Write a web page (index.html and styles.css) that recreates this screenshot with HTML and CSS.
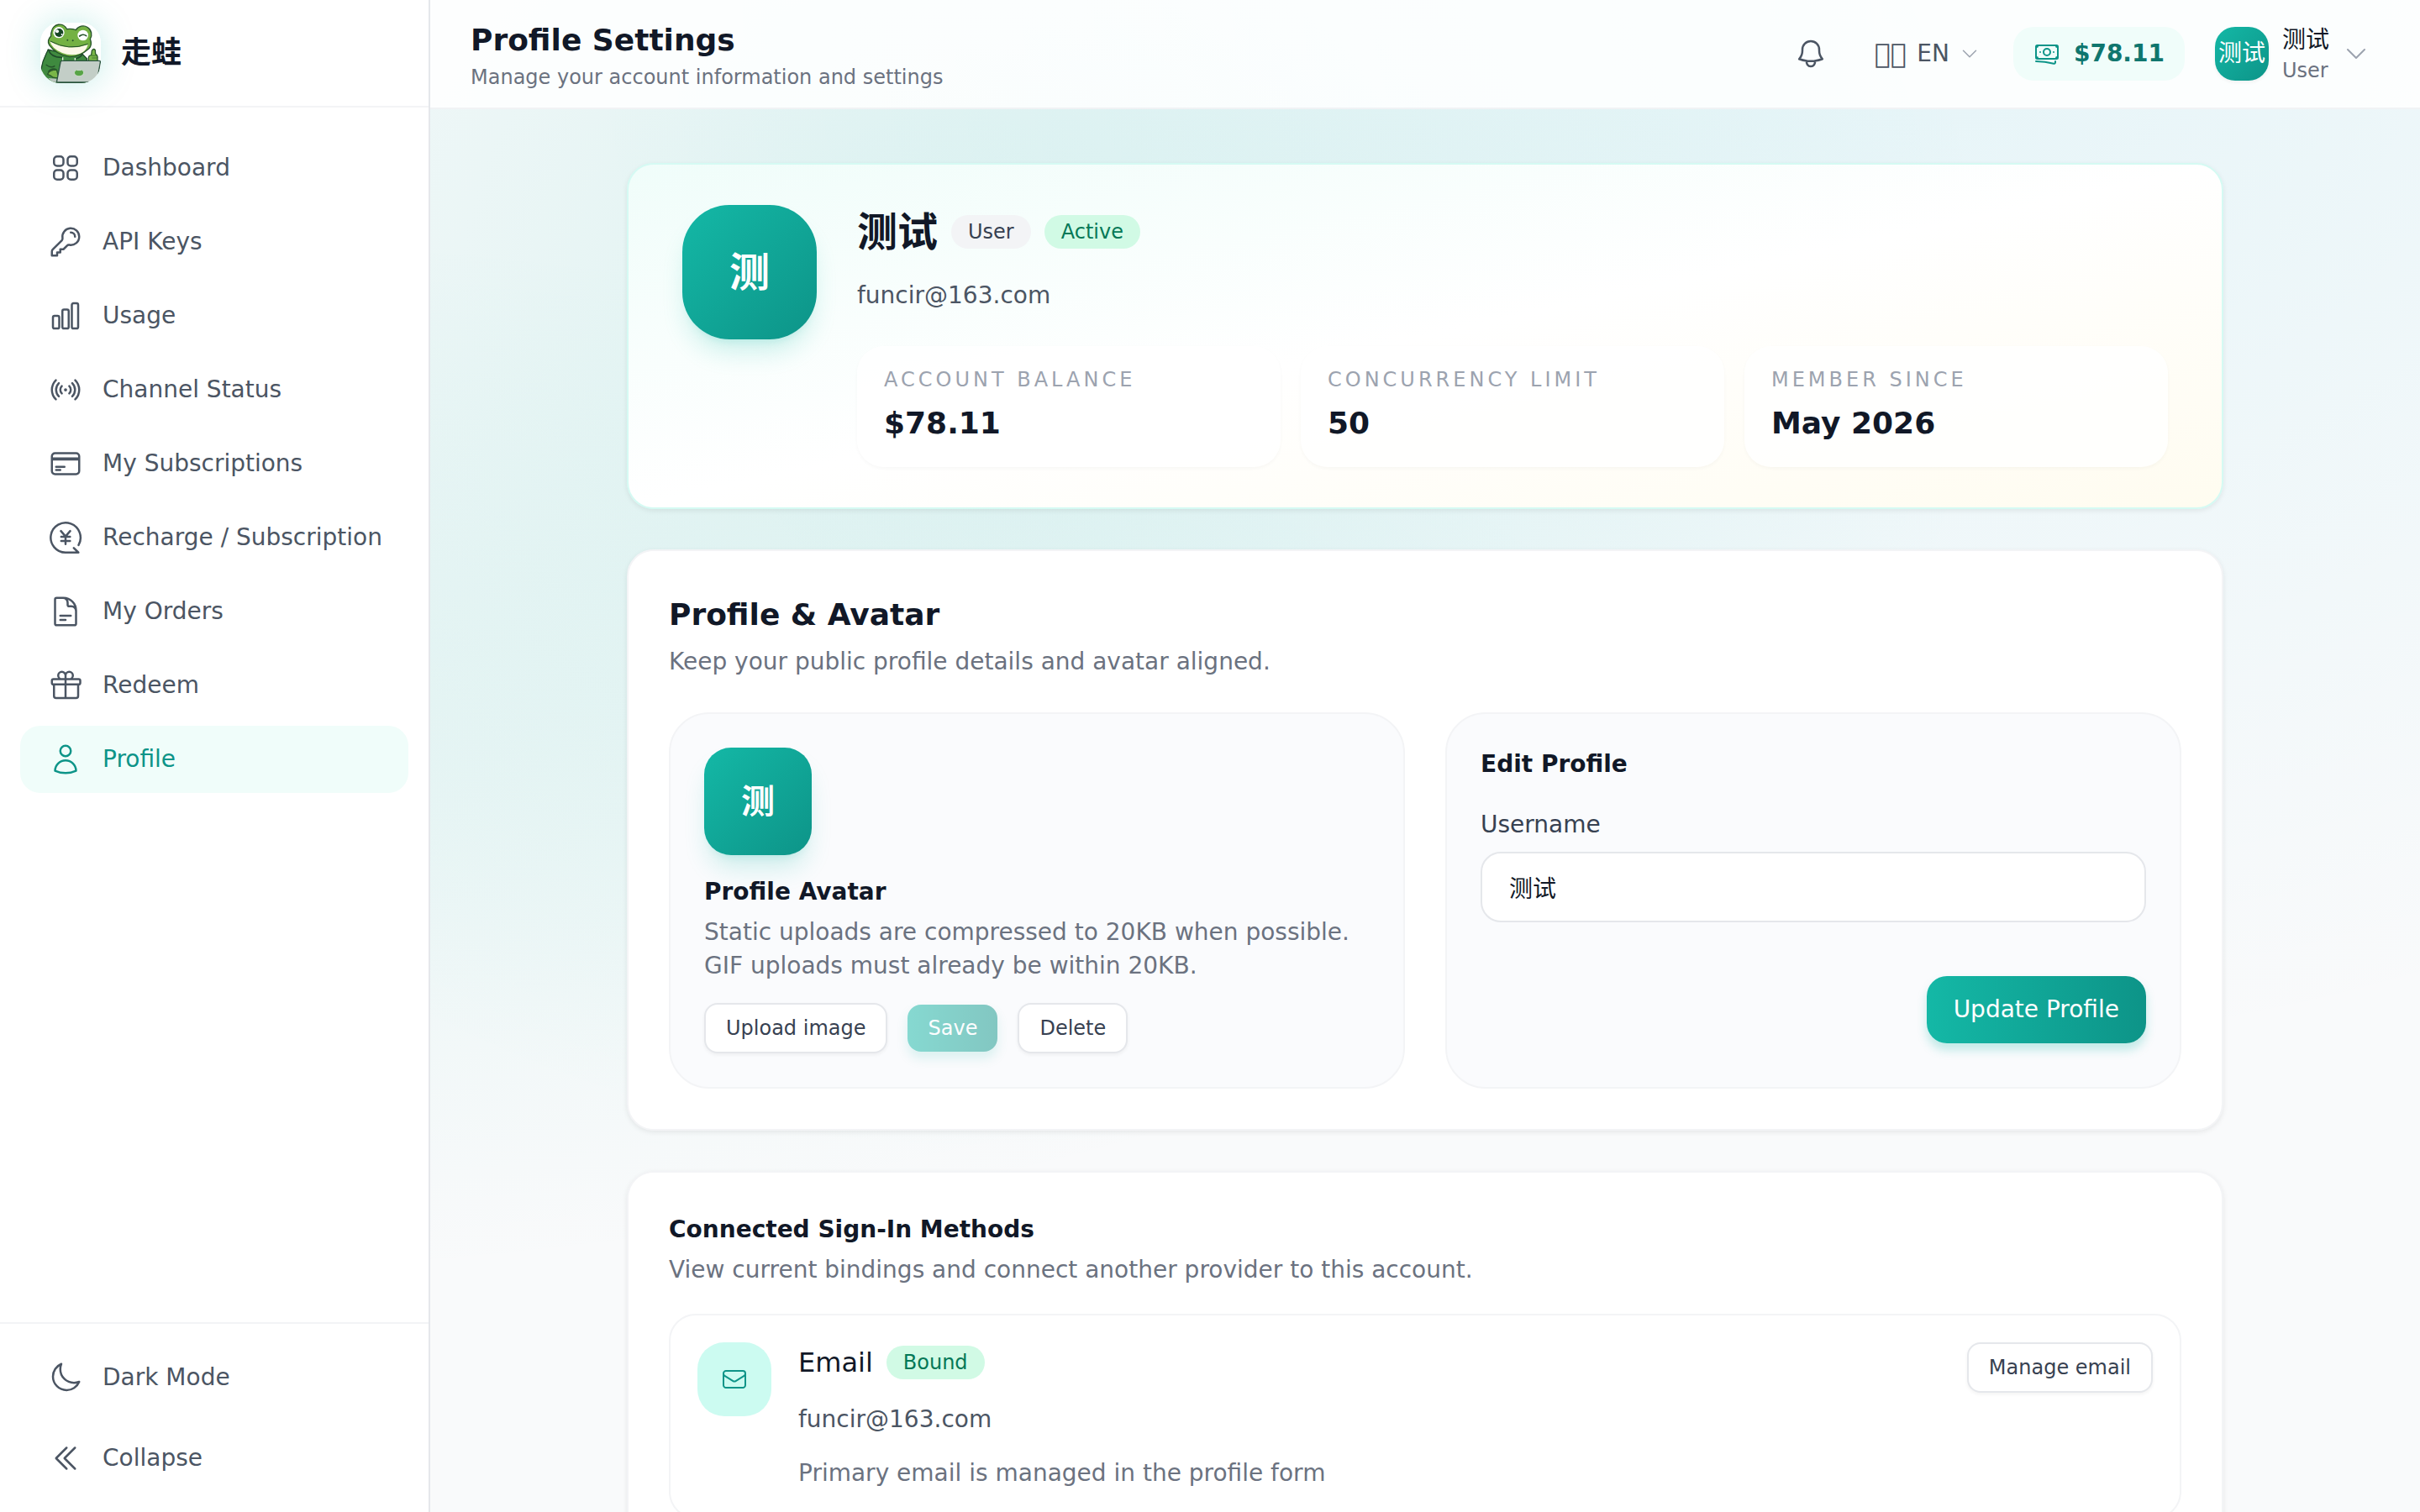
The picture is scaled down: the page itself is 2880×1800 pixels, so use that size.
FILE: index.html
```html
<!DOCTYPE html>
<html lang="en">
<head>
<meta charset="utf-8">
<meta name="viewport" content="width=device-width, initial-scale=1">
<title>Profile Settings</title>
<link rel="stylesheet" href="styles.css">
</head>
<body>
<div class="app">
  <aside class="sidebar">
    <div class="brand">
      <svg class="brand-logo" viewBox="0 0 216 216" aria-hidden="true">
        <rect width="216" height="216" fill="#fff"/>
        <path d="M2 170C8 130 18 118 28 96L60 104L150 112L166 128L170 216H30Q4 200 2 170Z" fill="#3f8a3f" stroke="#1f4a2a" stroke-width="4"/>
        <path d="M28 96Q40 126 78 124M150 112Q146 122 128 128" fill="none" stroke="#1f4a2a" stroke-width="5"/>
        <path d="M172 132Q170 116 182 116L184 100Q190 90 196 98L197 112Q206 116 204 130V138H172Z" fill="#7ab648" stroke="#2c5a2a" stroke-width="4"/>
        <path d="M184 118H200M184 126H202" stroke="#2c5a2a" stroke-width="2"/>
        <path d="M40 32A29 29 0 0 1 95 23Q110 20 127 26A28 28 0 1 1 178 58Q186 80 174 92Q140 122 104 122Q56 114 32 80Q22 64 38 48Q37 40 40 32Z" fill="#74b143" stroke="#25522a" stroke-width="4"/>
        <path d="M34 67Q100 104 170 78Q164 102 142 110Q110 120 78 108Q42 94 34 67Z" fill="#fdf9e8"/>
        <path d="M36 66Q100 102 170 76" fill="none" stroke="#25522a" stroke-width="3"/>
        <circle cx="66" cy="35" r="20" fill="#fff"/>
        <circle cx="67" cy="36" r="15" fill="#174524"/>
        <circle cx="60" cy="31" r="6" fill="#fff"/>
        <circle cx="77" cy="42" r="3" fill="#fff"/>
        <circle cx="152" cy="45" r="19" fill="#fff"/>
        <path d="M140 48Q152 38 164 47" fill="none" stroke="#25522a" stroke-width="5" stroke-linecap="round"/>
        <circle cx="97" cy="62" r="3" fill="#25522a"/><circle cx="116" cy="64" r="3" fill="#25522a"/>
        <path d="M20 150Q38 164 52 154M28 176Q38 162 56 166" fill="none" stroke="#25522a" stroke-width="4"/>
        <path d="M26 184Q32 168 58 168L66 196Q46 200 38 190Z" fill="#7ab648" stroke="#2c5a2a" stroke-width="4"/>
        <path d="M80 124V138M124 126V138" stroke="#e8efe2" stroke-width="4"/>
        <path d="M28 198L60 200L58 212H44Z" fill="#b9c4bd"/>
        <path d="M78 136H210Q216 136 214 142L203 206Q202 213 196 213H58L72 141Q73 136 78 136Z" fill="#c3cec7" stroke="#2c5540" stroke-width="4"/>
        <path d="M124 186Q118 174 126 172Q126 164 132 170H145Q151 164 151 172Q158 174 152 186Q138 196 124 186Z" fill="#58a447" stroke="#e1eadf" stroke-width="2"/>
      </svg>
      <span class="brand-name">走蛙</span>
    </div>
    <nav class="nav" aria-label="Main">
      <a class="nav-link" href="#dashboard"><svg class="icon" viewBox="0 0 24 24"><path d="M3.75 6A2.25 2.25 0 016 3.75h2.25A2.25 2.25 0 0110.5 6v2.25a2.25 2.25 0 01-2.25 2.25H6a2.25 2.25 0 01-2.25-2.25V6zM3.75 15.75A2.25 2.25 0 016 13.5h2.25a2.25 2.25 0 012.25 2.25V18a2.25 2.25 0 01-2.25 2.25H6A2.25 2.25 0 013.75 18v-2.25zM13.5 6a2.25 2.25 0 012.25-2.25H18A2.25 2.25 0 0120.25 6v2.25A2.25 2.25 0 0118 10.5h-2.25a2.25 2.25 0 01-2.25-2.25V6zM13.5 15.75a2.25 2.25 0 012.25-2.25H18a2.25 2.25 0 012.25 2.25V18A2.25 2.25 0 0118 20.25h-2.25A2.25 2.25 0 0113.5 18v-2.25z"/></svg>Dashboard</a>
      <a class="nav-link" href="#keys"><svg class="icon" viewBox="0 0 24 24"><path d="M15.75 5.25a3 3 0 013 3m3 0a6 6 0 01-7.029 5.912c-.563-.097-1.159.026-1.563.43L10.5 17.25H8.25v2.25H6v2.25H2.25v-2.818c0-.597.237-1.17.659-1.591l6.499-6.499c.404-.404.527-1 .43-1.563A6 6 0 1121.75 8.25z"/></svg>API Keys</a>
      <a class="nav-link" href="#usage"><svg class="icon" viewBox="0 0 24 24"><path d="M3 13.125C3 12.504 3.504 12 4.125 12h2.25c.621 0 1.125.504 1.125 1.125v6.75C7.5 20.496 6.996 21 6.375 21h-2.25A1.125 1.125 0 013 19.875v-6.75zM9.75 8.625c0-.621.504-1.125 1.125-1.125h2.25c.621 0 1.125.504 1.125 1.125v11.25c0 .621-.504 1.125-1.125 1.125h-2.25a1.125 1.125 0 01-1.125-1.125V8.625zM16.5 4.125c0-.621.504-1.125 1.125-1.125h2.25C20.496 3 21 3.504 21 4.125v15.75c0 .621-.504 1.125-1.125 1.125h-2.25a1.125 1.125 0 01-1.125-1.125V4.125z"/></svg>Usage</a>
      <a class="nav-link" href="#channels"><svg class="icon" viewBox="0 0 24 24"><path d="M9.348 14.651a3.75 3.75 0 010-5.303m5.304 0a3.75 3.75 0 010 5.303m-7.425 2.122a6.75 6.75 0 010-9.546m9.546 0a6.75 6.75 0 010 9.546M5.106 18.894c-3.808-3.807-3.808-9.98 0-13.788m13.788 0c3.808 3.807 3.808 9.98 0 13.788M12 12h.008v.008H12V12zm.375 0a.375.375 0 11-.75 0 .375.375 0 01.75 0z"/></svg>Channel Status</a>
      <a class="nav-link" href="#subscriptions"><svg class="icon" viewBox="0 0 24 24"><path d="M2.25 8.25h19.5M2.25 9h19.5m-16.5 5.25h6m-6 2.25h3m-3.75 3h15a2.25 2.25 0 002.25-2.25V6.75A2.25 2.25 0 0019.5 4.5h-15a2.25 2.25 0 00-2.25 2.25v10.5A2.25 2.25 0 004.5 19.5z"/></svg>My Subscriptions</a>
      <a class="nav-link" href="#recharge"><svg class="icon" viewBox="0 0 24 24"><path d="M21.3 17.3A10.65 10.65 0 1012 22.65h9.2L17.9 19.4M8.7 7.3L12 11.2l3.3-3.9M12 11.2v5.4M8.9 11.4h6.3M8.9 14.4h6.3"/></svg>Recharge / Subscription</a>
      <a class="nav-link" href="#orders"><svg class="icon" viewBox="0 0 24 24"><path d="M19.5 14.25v-2.625a3.375 3.375 0 00-3.375-3.375h-1.5A1.125 1.125 0 0113.5 7.125v-1.5a3.375 3.375 0 00-3.375-3.375H8.25m0 12.75h7.5m-7.5 3H12M10.5 2.25H5.625c-.621 0-1.125.504-1.125 1.125v17.25c0 .621.504 1.125 1.125 1.125h12.75c.621 0 1.125-.504 1.125-1.125V11.25a9 9 0 00-9-9z"/></svg>My Orders</a>
      <a class="nav-link" href="#redeem"><svg class="icon" viewBox="0 0 24 24"><path d="M21 11.25v8.25a1.5 1.5 0 01-1.5 1.5H5.25a1.5 1.5 0 01-1.5-1.5v-8.25M12 4.875A2.625 2.625 0 109.375 7.5H12m0-2.625V7.5m0-2.625A2.625 2.625 0 1114.625 7.5H12m0 0V21m-8.625-9.75h18c.621 0 1.125-.504 1.125-1.125v-1.5c0-.621-.504-1.125-1.125-1.125h-18c-.621 0-1.125.504-1.125 1.125v1.5c0 .621.504 1.125 1.125 1.125z"/></svg>Redeem</a>
      <a class="nav-link nav-link-active" href="#profile" aria-current="page"><svg class="icon" viewBox="0 0 24 24"><path d="M15.75 6a3.75 3.75 0 11-7.5 0 3.75 3.75 0 017.5 0zM4.501 20.118a7.5 7.5 0 0114.998 0A17.933 17.933 0 0112 21.75c-2.676 0-5.216-.584-7.499-1.632z"/></svg>Profile</a>
    </nav>
    <div class="sidebar-footer">
      <button class="nav-link" type="button"><svg class="icon" viewBox="0 0 24 24"><path d="M21.752 15.002A9.718 9.718 0 0118 15.75c-5.385 0-9.75-4.365-9.75-9.75 0-1.33.266-2.597.748-3.752A9.753 9.753 0 003 11.25C3 16.635 7.365 21 12.75 21a9.753 9.753 0 009.002-5.998z"/></svg>Dark Mode</button>
      <button class="nav-link" type="button"><svg class="icon" viewBox="0 0 24 24"><path d="M18.75 19.5l-7.5-7.5 7.5-7.5m-6 15L5.25 12l7.5-7.5"/></svg>Collapse</button>
    </div>
  </aside>

  <div class="page">
    <header class="topbar">
      <div class="topbar-heading">
        <h1 class="topbar-title">Profile Settings</h1>
        <p class="topbar-subtitle">Manage your account information and settings</p>
      </div>
      <div class="topbar-actions">
        <button class="icon-button" type="button" aria-label="Notifications"><svg class="icon" viewBox="0 0 24 24"><path d="M14.857 17.082a23.848 23.848 0 005.454-1.31A8.967 8.967 0 0118 9.75v-.7V9A6 6 0 006 9v.75a8.967 8.967 0 01-2.312 6.022c1.733.64 3.56 1.085 5.455 1.31m5.714 0a24.255 24.255 0 01-5.714 0m5.714 0a3 3 0 11-5.714 0"/></svg></button>
        <button class="language" type="button"><span class="flag">&#xEFFF;&#xEFFF;</span><span>EN</span><svg class="icon icon-small icon-muted" viewBox="0 0 24 24"><path d="M19.5 8.25l-7.5 7.5-7.5-7.5"/></svg></button>
        <a class="balance" href="#balance"><svg class="icon icon-medium" viewBox="0 0 24 24"><path d="M2.25 18.75a60.07 60.07 0 0115.797 2.101c.727.198 1.453-.342 1.453-1.096V18.75M3.75 4.5v.75A.75.75 0 013 6h-.75m0 0v-.375c0-.621.504-1.125 1.125-1.125H20.25M2.25 6v9m18-10.5v.75c0 .414.336.75.75.75h.75m-1.5-1.5h.375c.621 0 1.125.504 1.125 1.125v9.75c0 .621-.504 1.125-1.125 1.125h-.375m1.5-1.5H21a.75.75 0 00-.75.75v.75m0 0H3.75m0 0h-.375a1.125 1.125 0 01-1.125-1.125V15m1.5 1.5v-.75A.75.75 0 003 15h-.75M15 10.5a3 3 0 11-6 0 3 3 0 016 0zm3 0h.008v.008H18V10.5zm-12 0h.008v.008H6V10.5z"/></svg><span class="balance-value">$78.11</span></a>
        <button class="account" type="button">
          <span class="avatar avatar-small">测试</span>
          <span class="account-text"><span class="account-name">测试</span><span class="account-role">User</span></span>
          <svg class="icon icon-medium icon-muted" viewBox="0 0 24 24"><path d="M19.5 8.25l-7.5 7.5-7.5-7.5"/></svg>
        </button>
      </div>
    </header>

    <main class="content">
      <div class="content-inner">
        <section class="card hero">
          <div class="avatar avatar-large">测</div>
          <div class="hero-body">
            <div class="hero-name-row">
              <h2 class="hero-name">测试</h2>
              <span class="badge badge-gray">User</span>
              <span class="badge badge-green">Active</span>
            </div>
            <p class="hero-email">funcir@163.com</p>
            <dl class="stats">
              <div class="stat"><dt class="stat-label">Account Balance</dt><dd class="stat-value">$78.11</dd></div>
              <div class="stat"><dt class="stat-label">Concurrency Limit</dt><dd class="stat-value">50</dd></div>
              <div class="stat"><dt class="stat-label">Member Since</dt><dd class="stat-value">May 2026</dd></div>
            </dl>
          </div>
        </section>

        <section class="card">
          <h2 class="section-title">Profile &amp; Avatar</h2>
          <p class="section-text">Keep your public profile details and avatar aligned.</p>
          <div class="panels">
            <div class="panel">
              <div class="avatar avatar-medium">测</div>
              <h3 class="panel-title panel-title-spaced">Profile Avatar</h3>
              <p class="section-text">Static uploads are compressed to 20KB when possible. GIF uploads must already be within 20KB.</p>
              <div class="button-row">
                <button class="button button-small button-secondary" type="button">Upload image</button>
                <button class="button button-small button-primary" type="button" disabled>Save</button>
                <button class="button button-small button-secondary" type="button">Delete</button>
              </div>
            </div>
            <form class="panel">
              <h3 class="panel-title">Edit Profile</h3>
              <label class="field-label" for="username">Username</label>
              <input class="field-input" id="username" type="text" value="测试">
              <div class="form-actions"><button class="button button-primary" type="button">Update Profile</button></div>
            </form>
          </div>
        </section>

        <section class="card">
          <h2 class="panel-title">Connected Sign-In Methods</h2>
          <p class="section-text">View current bindings and connect another provider to this account.</p>
          <div class="method">
            <div class="method-icon"><svg class="icon icon-medium" viewBox="0 0 24 24"><path d="M21.75 6.75v10.5a2.25 2.25 0 01-2.25 2.25h-15a2.25 2.25 0 01-2.25-2.25V6.75m19.5 0A2.25 2.25 0 0019.5 4.5h-15a2.25 2.25 0 00-2.25 2.25m19.5 0v.243a2.25 2.25 0 01-1.07 1.916l-7.5 4.615a2.25 2.25 0 01-2.36 0L3.32 8.91a2.25 2.25 0 01-1.07-1.916V6.75"/></svg></div>
            <div class="method-body">
              <div class="method-name-row"><h3 class="method-name">Email</h3><span class="badge badge-green">Bound</span></div>
              <p class="method-address">funcir@163.com</p>
              <p class="method-note">Primary email is managed in the profile form</p>
            </div>
            <button class="button button-small button-secondary" type="button">Manage email</button>
          </div>
        </section>
      </div>
    </main>
  </div>
</div>
</body>
</html>
```
FILE: styles.css
```css
:root {
  --gray-50: #f9fafb;
  --gray-100: #f3f4f6;
  --gray-200: #e5e7eb;
  --gray-400: #9ca3af;
  --gray-500: #6b7280;
  --gray-600: #4b5563;
  --gray-700: #374151;
  --gray-900: #111827;
  --teal-50: #f0fdfa;
  --teal-100: #ccfbf1;
  --teal-500: #14b8a6;
  --teal-600: #0d9488;
  --teal-700: #0f766e;
}

*,
*::before,
*::after {
  box-sizing: border-box;
}

body,
h1,
h2,
h3,
p,
dl,
dd {
  margin: 0;
}

body {
  background: var(--gray-50);
  color: var(--gray-900);
  font-family: "DejaVu Sans", "Noto Sans CJK SC", sans-serif;
  font-size: 28px;
  line-height: 40px;
}

a {
  color: inherit;
  text-decoration: none;
}

button,
input {
  margin: 0;
  border: 0;
  background: none;
  color: inherit;
  font: inherit;
}

.app {
  display: flex;
  height: 100vh;
  background:
    radial-gradient(at 40% 20%, rgba(20, 184, 166, 0.12) 0, transparent 50%),
    radial-gradient(at 80% 0%, rgba(6, 182, 212, 0.08) 0, transparent 50%),
    radial-gradient(at 0% 50%, rgba(20, 184, 166, 0.08) 0, transparent 50%),
    var(--gray-50);
}

/* Icons */

.icon {
  width: 40px;
  height: 40px;
  flex: none;
  fill: none;
  stroke: currentColor;
  stroke-width: 1.5;
  stroke-linecap: round;
  stroke-linejoin: round;
}

.icon-medium {
  width: 32px;
  height: 32px;
}

.icon-small {
  width: 24px;
  height: 24px;
}

.icon-muted {
  color: var(--gray-400);
}

/* Sidebar */

.sidebar {
  display: flex;
  flex-direction: column;
  flex: none;
  width: 512px;
  border-right: 2px solid var(--gray-200);
  background: #fff;
}

.brand {
  display: flex;
  align-items: center;
  gap: 24px;
  height: 128px;
  padding: 0 48px;
  border-bottom: 2px solid var(--gray-100);
}

.brand-logo {
  width: 72px;
  height: 72px;
  border-radius: 24px;
  box-shadow: 0 0 40px rgba(20, 184, 166, 0.25);
}

.brand-name {
  font-size: 36px;
  font-weight: 700;
}

.nav {
  display: flex;
  flex: 1;
  flex-direction: column;
  gap: 8px;
  padding: 32px 24px;
}

.nav-link {
  display: flex;
  align-items: center;
  gap: 24px;
  height: 80px;
  padding: 0 34px;
  border-radius: 24px;
  color: var(--gray-600);
  white-space: nowrap;
}

.nav-link-active {
  background: var(--teal-50);
  color: var(--teal-600);
}

.sidebar-footer {
  display: flex;
  flex-direction: column;
  gap: 16px;
  padding: 24px;
  border-top: 2px solid var(--gray-100);
}

/* Top bar */

.page {
  display: flex;
  flex: 1;
  flex-direction: column;
  min-width: 0;
}

.topbar {
  display: flex;
  align-items: center;
  justify-content: space-between;
  flex: none;
  height: 130px;
  padding: 0 48px;
  border-bottom: 2px solid rgba(229, 231, 235, 0.5);
  background: rgba(255, 255, 255, 0.85);
}

.topbar-title {
  font-size: 36px;
  line-height: 56px;
}

.topbar-subtitle {
  color: var(--gray-500);
  font-size: 24px;
  line-height: 32px;
}

.topbar-actions {
  display: flex;
  align-items: center;
  gap: 24px;
}

.icon-button {
  display: flex;
  padding: 16px;
  color: var(--gray-600);
}

.language {
  display: flex;
  align-items: center;
  gap: 12px;
  padding: 12px 16px;
  color: var(--gray-600);
}

.flag {
  font-size: 32px;
}

.balance {
  display: flex;
  align-items: center;
  gap: 16px;
  padding: 12px 24px;
  border-radius: 24px;
  background: var(--teal-50);
  color: var(--teal-600);
}

.balance-value {
  color: var(--teal-700);
  font-weight: 700;
}

.account {
  display: flex;
  align-items: center;
  gap: 16px;
  padding: 12px;
  text-align: left;
}

.account-text {
  display: flex;
  flex-direction: column;
}

.account-role {
  color: var(--gray-500);
  font-size: 24px;
  line-height: 32px;
}

/* Avatars */

.avatar {
  display: flex;
  align-items: center;
  justify-content: center;
  flex: none;
  background: linear-gradient(to bottom right, var(--teal-500), var(--teal-600));
  color: #fff;
  font-weight: 700;
}

.avatar-small {
  width: 64px;
  height: 64px;
  border-radius: 24px;
  box-shadow: 0 2px 4px rgba(0, 0, 0, 0.05);
  font-weight: 400;
}

.avatar-medium,
.avatar-large {
  box-shadow:
    0 20px 30px -6px rgba(20, 184, 166, 0.2),
    0 8px 12px -8px rgba(20, 184, 166, 0.2);
}

.avatar-medium {
  width: 128px;
  height: 128px;
  border-radius: 32px;
  font-size: 40px;
}

.avatar-large {
  width: 160px;
  height: 160px;
  border-radius: 56px;
  font-size: 48px;
}

/* Content and cards */

.content {
  flex: 1;
  min-height: 0;
  overflow-y: auto;
  padding: 64px;
  scrollbar-width: none;
}

.content-inner {
  display: flex;
  flex-direction: column;
  gap: 48px;
  max-width: 1900px;
  margin: 0 auto;
}

.card {
  padding: 48px;
  border: 2px solid var(--gray-100);
  border-radius: 32px;
  background: #fff;
  box-shadow: 0 2px 6px rgba(0, 0, 0, 0.08);
}

.hero {
  display: flex;
  align-items: flex-start;
  gap: 48px;
  padding: 48px 64px;
  border-color: #d5faf3;
  background: linear-gradient(to bottom right, var(--teal-50), #fff 50%, #fffcf0);
}

.hero-body {
  flex: 1;
  min-width: 0;
}

.hero-name-row,
.method-name-row {
  display: flex;
  align-items: center;
  gap: 16px;
}

.hero-name {
  font-size: 48px;
  line-height: 64px;
}

.badge {
  padding: 4px 20px;
  border-radius: 20px;
  font-size: 24px;
  line-height: 32px;
}

.badge-gray {
  background: var(--gray-100);
  color: var(--gray-700);
}

.badge-green {
  background: #d1fae5;
  color: #047857;
}

.hero-email {
  margin-top: 24px;
  color: var(--gray-600);
}

.stats {
  display: grid;
  grid-template-columns: repeat(3, 1fr);
  gap: 24px;
  margin-top: 40px;
}

.stat {
  padding: 24px 32px;
  border-radius: 32px;
  background: rgba(255, 255, 255, 0.8);
  box-shadow: 0 2px 4px rgba(0, 0, 0, 0.03);
}

.stat-label {
  color: var(--gray-400);
  font-size: 24px;
  letter-spacing: 4px;
  line-height: 32px;
  text-transform: uppercase;
}

.stat-value {
  margin-top: 8px;
  font-size: 36px;
  font-weight: 700;
  line-height: 56px;
}

.section-title {
  font-size: 36px;
  line-height: 56px;
}

.section-text {
  margin-top: 8px;
  color: var(--gray-500);
}

.panels {
  display: grid;
  grid-template-columns: repeat(2, 1fr);
  gap: 48px;
  margin-top: 40px;
}

.panel {
  padding: 40px;
  border: 2px solid var(--gray-100);
  border-radius: 48px;
  background: #fafbfd;
}

.panel-title {
  font-size: 28px;
  line-height: 40px;
}

.panel-title-spaced {
  margin-top: 24px;
}

/* Buttons and fields */

.button {
  padding: 20px 32px;
  border-radius: 24px;
  white-space: nowrap;
}

.button-small {
  padding: 12px 24px;
  border-radius: 16px;
  font-size: 24px;
  line-height: 32px;
}

.button-primary {
  background: linear-gradient(to right, var(--teal-500), var(--teal-600));
  box-shadow: 0 8px 12px rgba(20, 184, 166, 0.25);
  color: #fff;
}

.button-primary:disabled {
  opacity: 0.5;
}

.button-secondary {
  border: 2px solid var(--gray-200);
  background: #fff;
  box-shadow: 0 2px 4px rgba(0, 0, 0, 0.05);
  color: var(--gray-700);
}

.button-row {
  display: flex;
  flex-wrap: wrap;
  align-items: center;
  gap: 24px;
  margin-top: 24px;
}

.field-label {
  display: block;
  margin: 32px 0 12px;
  color: var(--gray-700);
}

.field-input {
  display: block;
  width: 100%;
  height: 84px;
  padding: 20px 32px;
  border: 2px solid var(--gray-200);
  border-radius: 24px;
  background: #fff;
  color: var(--gray-900);
}

.form-actions {
  display: flex;
  justify-content: flex-end;
  margin-top: 64px;
}

/* Sign-in methods */

.method {
  display: flex;
  align-items: flex-start;
  gap: 32px;
  margin-top: 32px;
  padding: 32px;
  border: 2px solid var(--gray-100);
  border-radius: 32px;
}

.method-icon {
  display: flex;
  align-items: center;
  justify-content: center;
  width: 88px;
  height: 88px;
  border-radius: 32px;
  background: var(--teal-100);
  color: var(--teal-600);
}

.method-body {
  flex: 1;
  min-width: 0;
}

.method-name {
  font-size: 32px;
  font-weight: 400;
  line-height: 48px;
}

.method-address,
.method-note {
  margin-top: 24px;
}

.method-address {
  color: var(--gray-600);
}

.method-note {
  color: var(--gray-500);
}
```
